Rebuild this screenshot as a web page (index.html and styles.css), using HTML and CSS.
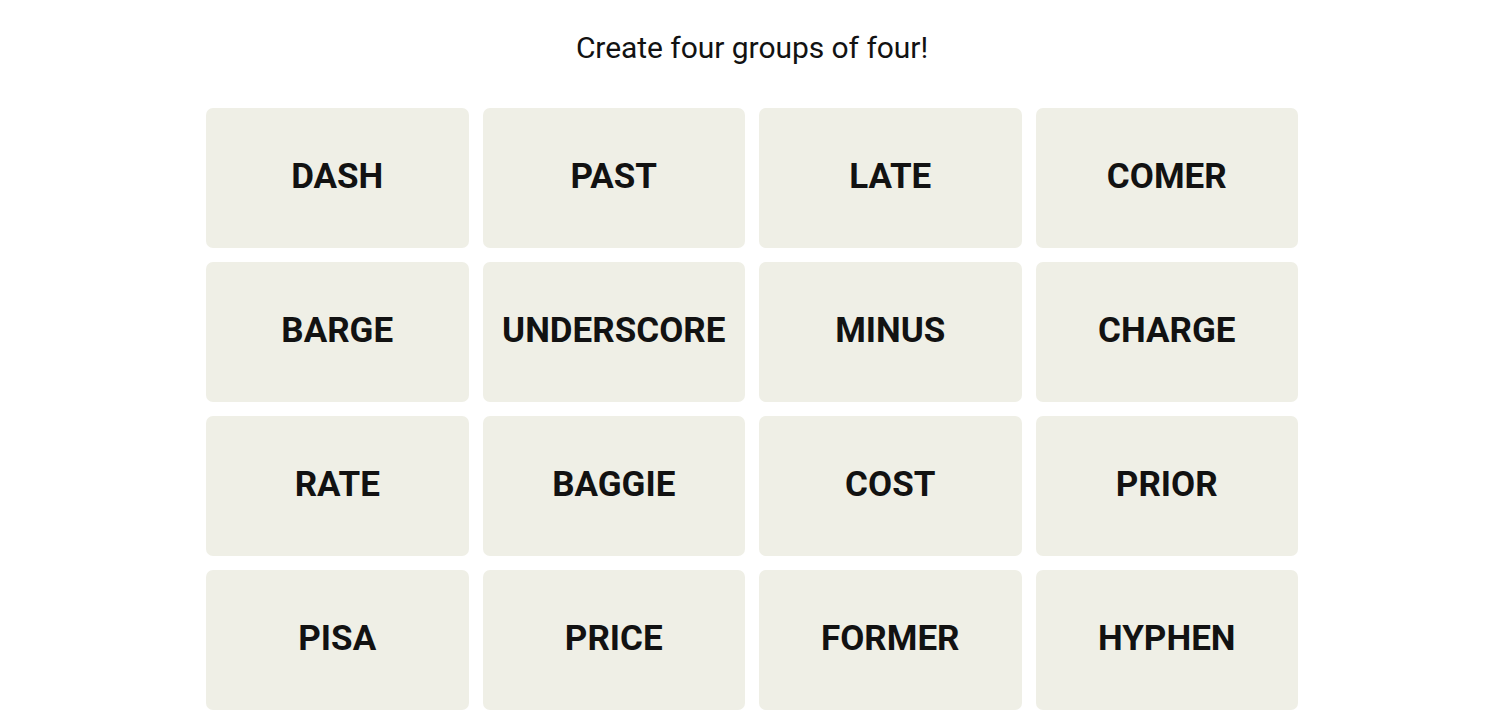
FILE: index.html
```html
<!DOCTYPE html>
<html lang="en">
<head>
  <meta charset="UTF-8">
  <title>Connections</title>
  <link rel="stylesheet" href="styles.css">
</head>
<body>
  <main class="board">
    <p class="prompt">Create four groups of four!</p>

    <div class="grid">
      <button class="tile">DASH</button>
      <button class="tile">PAST</button>
      <button class="tile">LATE</button>
      <button class="tile">COMER</button>

      <button class="tile">BARGE</button>
      <button class="tile">UNDERSCORE</button>
      <button class="tile">MINUS</button>
      <button class="tile">CHARGE</button>

      <button class="tile">RATE</button>
      <button class="tile">BAGGIE</button>
      <button class="tile">COST</button>
      <button class="tile">PRIOR</button>

      <button class="tile">PISA</button>
      <button class="tile">PRICE</button>
      <button class="tile">FORMER</button>
      <button class="tile">HYPHEN</button>
    </div>
  </main>
</body>
</html>
```

FILE: styles.css
```css
body {
  margin: 0;
  background: #fff;
  color: #121212;
  font-family: Roboto, "Liberation Sans", sans-serif;
}

.board {
  padding-left: 4px; /* content sits a touch right of centre */
  display: flex;
  flex-direction: column;
  align-items: center;
}

.prompt {
  margin: 29px 0 0;
  font-size: 30px;
  line-height: 38px;
  font-weight: 400;
  letter-spacing: -0.05px;
}

.grid {
  margin-top: 41px;
  width: 1092px;
  display: grid;
  grid-template-columns: repeat(4, 1fr);
  grid-auto-rows: 140px;
  gap: 14px;
}

.tile {
  border: none;
  border-radius: 7px;
  background-color: #efefe6;
  color: #121212;
  font-family: Roboto, "Liberation Sans", sans-serif;
  font-size: 35px;
  font-weight: 700;
  padding: 0 0 3px;
  cursor: pointer;
}
```
